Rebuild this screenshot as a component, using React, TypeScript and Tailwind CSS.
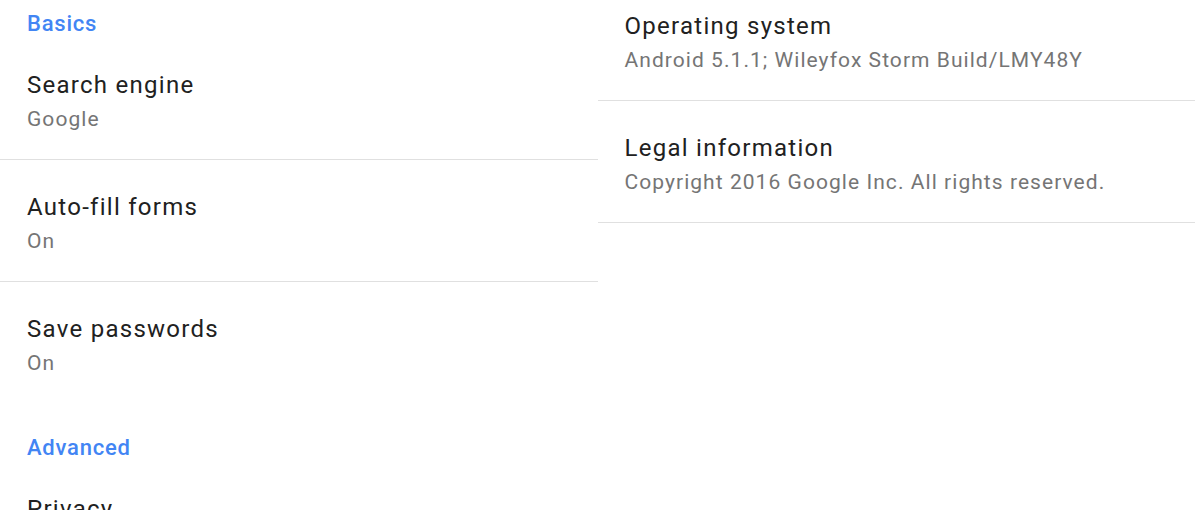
const basics = [
  { title: "Search engine", value: "Google" },
  { title: "Auto-fill forms", value: "On" },
  { title: "Save passwords", value: "On", last: true },
];

const about = [
  { title: "Operating system", value: "Android 5.1.1; Wileyfox Storm Build/LMY48Y" },
  { title: "Legal information", value: "Copyright 2016 Google Inc. All rights reserved." },
];

const Row = ({ title, value, last }: { title: string; value?: string; last?: boolean }) => (
  <div className={`h-[122px] px-[27px] pt-[31px] ${last ? "" : "border-b border-[#e0e0e0]"}`}>
    <div className="text-[24px] leading-[32px] tracking-[0.053em] text-[#212121]">{title}</div>
    {value && (
      <div className="mt-[4px] text-[21px] leading-[28px] tracking-[0.05em] text-[#757575]">{value}</div>
    )}
  </div>
);

const Header = ({ label, top }: { label: string; top: string }) => (
  <div className={`px-[27px] ${top} text-[22px] leading-[28px] font-medium tracking-[0.035em] text-[#4285f4]`}>
    {label}
  </div>
);

const App = () => {
  return (
    <div
      className="grid h-[510px] w-[1195px] grid-cols-2 overflow-hidden bg-white"
      style={{ fontFamily: "Roboto, 'Noto Sans', sans-serif" }}
    >
      <div className="flex flex-col">
        <Header label="Basics" top="pt-[10px]" />
        {basics.map((item) => (
          <Row key={item.title} {...item} />
        ))}
        <Header label="Advanced" top="pt-[30px]" />
        <Row title="Privacy" />
      </div>
      <div className="-mt-[21px] flex flex-col">
        {about.map((item) => (
          <Row key={item.title} {...item} />
        ))}
      </div>
    </div>
  );
};

export default App;
